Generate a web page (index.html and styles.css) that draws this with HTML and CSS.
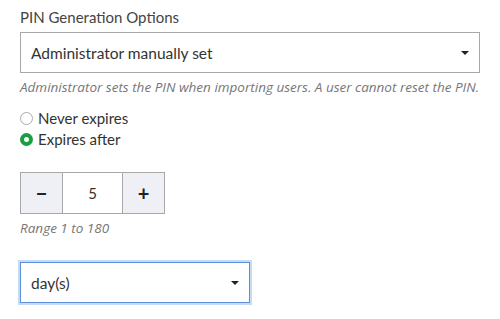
FILE: index.html
```html
<!DOCTYPE html>
<html lang="en">
<head>
  <meta charset="UTF-8">
  <title>PIN Options</title>
  <link rel="stylesheet" href="styles.css">
</head>
<body>
  <div class="form">
    <label class="field-label">PIN Generation Options</label>
    <div class="select select-wide">
      <span>Administrator manually set</span>
      <span class="caret"></span>
    </div>
    <p class="help">Administrator sets the PIN when importing users. A user cannot reset the PIN.</p>

    <div class="radios">
      <div class="radio-row">
        <span class="radio"></span>
        <span>Never expires</span>
      </div>
      <div class="radio-row">
        <span class="radio checked"></span>
        <span>Expires after</span>
      </div>
    </div>

    <div class="stepper">
      <button class="step-btn">&minus;</button>
      <div class="step-value">5</div>
      <button class="step-btn">+</button>
    </div>
    <p class="help range">Range 1 to 180</p>

    <div class="select select-small focused">
      <span>day(s)</span>
      <span class="caret"></span>
    </div>
  </div>
</body>
</html>
```

FILE: styles.css
```css
body {
  margin: 0;
  background: #fff;
  font-family: Lato, 'Open Sans', sans-serif;
  color: #333;
}

.form {
  padding: 8px 20px;
  display: flex;
  flex-direction: column;
  align-items: flex-start;
}

.field-label {
  font-size: 15px;
  color: #444;
  line-height: 18px;
  margin-bottom: 6px;
}

.select {
  box-sizing: border-box;
  height: 41px;
  border: 1px solid #a8a8a8;
  display: flex;
  align-items: center;
  justify-content: space-between;
  padding: 0 10px 0 10px;
  font-size: 15.5px;
  color: #333;
}

.select-wide {
  width: 460px;
}

.select-small {
  width: 230px;
}

.select.focused {
  border: 1px solid #5b8fd6;
  box-shadow: 0 0 0 2px #c6dbf5;
}

.caret {
  width: 0;
  height: 0;
  border-left: 4px solid transparent;
  border-right: 4px solid transparent;
  border-top: 4px solid #222;
  margin-right: 0;
}

.help {
  margin: 6px 0 0 0;
  font-family: 'Open Sans', sans-serif;
  font-size: 13.5px;
  font-style: italic;
  color: #777;
  line-height: 16px;
  white-space: nowrap;
}

.radios {
  margin-top: 15px;
  display: flex;
  flex-direction: column;
  gap: 4px;
}

.radio-row {
  display: flex;
  align-items: center;
  gap: 5px;
  font-size: 15px;
  line-height: 17px;
}

.radio {
  box-sizing: border-box;
  width: 13px;
  height: 13px;
  border-radius: 50%;
  border: 1px solid #aaa;
}

.radio.checked {
  border: 4px solid #13a23f;
}

.stepper {
  margin-top: 24px;
  display: flex;
  border: 1px solid #a8a8a8;
  height: 42px;
  box-sizing: border-box;
}

.step-btn {
  width: 41px;
  border: none;
  background: #eef0f5;
  font-family: Lato, sans-serif;
  font-size: 20px;
  font-weight: 700;
  color: #222;
  padding: 0;
}

.step-value {
  width: 59px;
  border-left: 1px solid #a8a8a8;
  border-right: 1px solid #a8a8a8;
  display: flex;
  align-items: center;
  justify-content: center;
  font-size: 15px;
}

.range {
  margin-top: 6px;
  margin-bottom: 26px;
}
```
